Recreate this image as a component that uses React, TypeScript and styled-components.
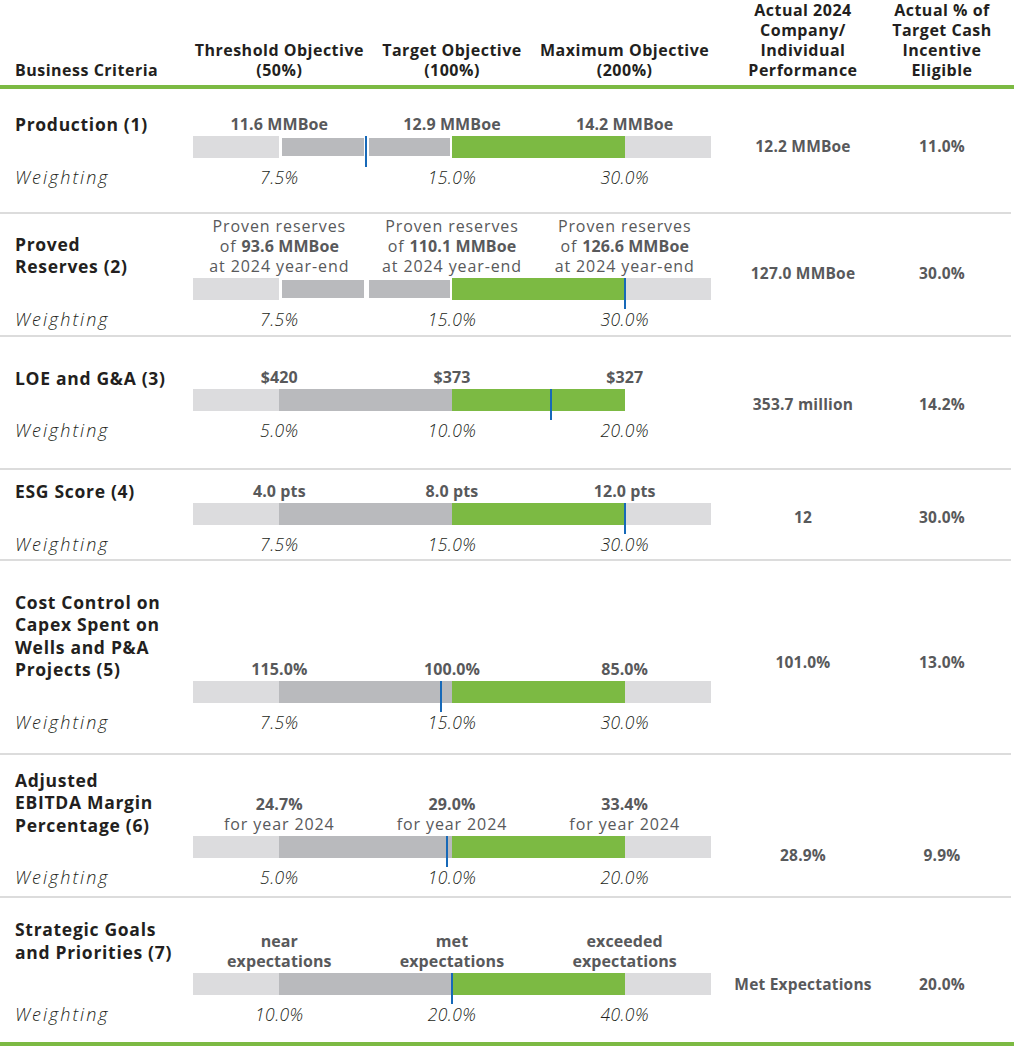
import React from "react";
import styled, { createGlobalStyle } from "styled-components";

const INK = "#231f20";
const GREY_TEXT = "#58595b";
const GREEN = "#7cba43";
const LIGHT = "#dcdcde";
const MID = "#b9babd";
const BLUE = "#1769b8";
const RULE = "#dcdcdc";

const Global = createGlobalStyle`
  html, body { margin: 0; padding: 0; background: #fff; }
  body { font-family: "Open Sans", "DejaVu Sans", sans-serif; color: ${INK}; }
`;

const Table = styled.div`
  width: 1014px;
  display: flex;
  flex-direction: column;
`;

const Header = styled.div`
  display: grid;
  grid-template-columns: 178px repeat(3, 172.67px) 184px 94px;
  align-items: end;
  height: 80px;
  padding: 0 0 5px 15px;
  border-bottom: 4px solid ${GREEN};
  font-weight: 700;
  font-size: 16px;
  line-height: 20px;
  letter-spacing: 0.5px;
`;

const HeadCell = styled.div<{ $left?: boolean }>`
  text-align: ${(p) => (p.$left ? "left" : "center")};
  white-space: nowrap;
  justify-self: ${(p) => (p.$left ? "start" : "center")};
`;

const Row = styled.div<{ $pt: number; $pb: number; $last?: boolean }>`
  display: grid;
  grid-template-columns: 178px 518px 184px 94px;
  grid-template-rows: auto auto auto;
  padding: ${(p) => p.$pt}px 0 ${(p) => p.$pb}px 15px;
  margin-right: ${(p) => (p.$last ? 0 : 3)}px;
  border-bottom: ${(p) => (p.$last ? `4px solid ${GREEN}` : `2px solid ${RULE}`)};
`;

const Title = styled.div<{ $mb?: number }>`
  grid-column: 1;
  grid-row: 1;
  align-self: end;
  margin-bottom: ${(p) => p.$mb ?? 0}px;
  font-weight: 700;
  font-size: 17.5px;
  line-height: 22.5px;
  letter-spacing: 0.7px;
  color: ${INK};
  white-space: nowrap;
`;

const Labels = styled.div`
  grid-column: 2;
  grid-row: 1;
  align-self: end;
  display: grid;
  grid-template-columns: repeat(3, 1fr);
  padding-bottom: 2px;
`;

const Label = styled.div<{ $bold?: boolean }>`
  text-align: center;
  white-space: nowrap;
  font-size: 16px;
  letter-spacing: ${(p) => (p.$bold ? 0.1 : 0.9)}px;
  line-height: 20px;
  font-weight: ${(p) => (p.$bold ? 700 : 400)};
  color: ${GREY_TEXT};
  b {
    font-weight: 700;
    letter-spacing: 0.1px;
  }
`;

const Bar = styled.div<{ $split?: boolean }>`
  grid-column: 2;
  grid-row: 2;
  position: relative;
  height: 22px;
  display: grid;
  grid-template-columns: ${(p) => (p.$split ? "1fr 1fr 1fr 2fr 1fr" : "1fr 2fr 2fr 1fr")};
`;

const Segment = styled.div<{ $tone: "light" | "mid" | "green" | "none"; $inset?: boolean }>`
  background: ${(p) =>
    p.$tone === "light" ? LIGHT : p.$tone === "mid" ? MID : p.$tone === "green" ? GREEN : "transparent"};
  border: ${(p) => (p.$inset ? "2px solid #fff" : "0")};
  border-left-width: ${(p) => (p.$inset ? 3 : 0)}px;
`;

const Marker = styled.div`
  position: absolute;
  top: 0;
  width: 2px;
  height: 31px;
  margin-left: -1px;
  background: ${BLUE};
`;

const WeightLabel = styled.div`
  grid-column: 1;
  grid-row: 3;
  margin-top: 8px;
  font-style: italic;
  font-weight: 300;
  font-size: 18px;
  letter-spacing: 2px;
  line-height: 22px;
  color: ${INK};
`;

const Weights = styled.div`
  grid-column: 2;
  grid-row: 3;
  margin-top: 8px;
  display: grid;
  grid-template-columns: repeat(3, 1fr);
`;

const Weight = styled.div`
  text-align: center;
  font-style: italic;
  font-weight: 300;
  font-size: 17.5px;
  letter-spacing: 0.4px;
  line-height: 22px;
  color: ${INK};
`;

const Value = styled.div<{ $col: number; $nudge?: number }>`
  grid-column: ${(p) => p.$col};
  grid-row: 1 / 4;
  align-self: center;
  text-align: center;
  white-space: nowrap;
  font-weight: 700;
  font-size: 15.5px;
  letter-spacing: 0.2px;
  line-height: 20px;
  color: ${GREY_TEXT};
  padding-top: ${(p) => Math.max(0, (p.$nudge ?? 0) * 2)}px;
  padding-bottom: ${(p) => Math.max(0, -(p.$nudge ?? 0) * 2)}px;
`;

type Tone = "light" | "mid" | "green" | "none";

interface RowData {
  title: React.ReactNode;
  titleMb?: number;
  labels: React.ReactNode[];
  labelsBold: boolean;
  split?: boolean;
  tail?: boolean;
  marker: number;
  weights: string[];
  actual: string;
  pct: string;
  pt: number;
  pb: number;
  nudge?: number;
}

const rows: RowData[] = [
  {
    title: "Production (1)",
    labels: ["11.6 MMBoe", "12.9 MMBoe", "14.2 MMBoe"],
    labelsBold: true,
    split: true,
    marker: 366,
    weights: ["7.5%", "15.0%", "30.0%"],
    actual: "12.2 MMBoe",
    pct: "11.0%",
    pt: 24,
    pb: 24,
    nudge: -4,
  },
  {
    title: (
      <>
        Proved
        <br />
        Reserves (2)
      </>
    ),
    labels: [
      <>
        Proven reserves
        <br />
        of <b>93.6 MMBoe</b>
        <br />
        at 2024 year-end
      </>,
      <>
        Proven reserves
        <br />
        of <b>110.1 MMBoe</b>
        <br />
        at 2024 year-end
      </>,
      <>
        Proven reserves
        <br />
        of <b>126.6 MMBoe</b>
        <br />
        at 2024 year-end
      </>,
    ],
    labelsBold: false,
    split: true,
    marker: 625,
    weights: ["7.5%", "15.0%", "30.0%"],
    actual: "127.0 MMBoe",
    pct: "30.0%",
    pt: 2,
    pb: 5,
  },
  {
    title: "LOE and G&A (3)",
    labels: ["$420", "$373", "$327"],
    labelsBold: true,
    tail: false,
    marker: 551,
    weights: ["5.0%", "10.0%", "20.0%"],
    actual: "353.7 million",
    pct: "14.2%",
    pt: 30,
    pb: 27,
  },
  {
    title: "ESG Score (4)",
    labels: ["4.0 pts", "8.0 pts", "12.0 pts"],
    labelsBold: true,
    marker: 625,
    weights: ["7.5%", "15.0%", "30.0%"],
    actual: "12",
    pct: "30.0%",
    pt: 10,
    pb: 4,
  },
  {
    title: (
      <>
        Cost Control on
        <br />
        Capex Spent on
        <br />
        Wells and P&amp;A
        <br />
        Projects (5)
      </>
    ),
    labels: ["115.0%", "100.0%", "85.0%"],
    labelsBold: true,
    marker: 441,
    weights: ["7.5%", "15.0%", "30.0%"],
    actual: "101.0%",
    pct: "13.0%",
    pt: 30,
    pb: 20,
  },
  {
    title: (
      <>
        Adjusted
        <br />
        EBITDA Margin
        <br />
        Percentage (6)
      </>
    ),
    labels: [
      <>
        <b>24.7%</b>
        <br />
        for year 2024
      </>,
      <>
        <b>29.0%</b>
        <br />
        for year 2024
      </>,
      <>
        <b>33.4%</b>
        <br />
        for year 2024
      </>,
    ],
    labelsBold: false,
    marker: 447,
    weights: ["5.0%", "10.0%", "20.0%"],
    actual: "28.9%",
    pct: "9.9%",
    pt: 14,
    pb: 8,
    nudge: 27,
  },
  {
    title: (
      <>
        Strategic Goals
        <br />
        and Priorities (7)
      </>
    ),
    titleMb: 10,
    labels: [
      <>
        near
        <br />
        expectations
      </>,
      <>
        met
        <br />
        expectations
      </>,
      <>
        exceeded
        <br />
        expectations
      </>,
    ],
    labelsBold: true,
    marker: 452,
    weights: ["10.0%", "20.0%", "40.0%"],
    actual: "Met Expectations",
    pct: "20.0%",
    pt: 20,
    pb: 17,
    nudge: 12,
  },
];

const BAR_START = 193;
const BAR_WIDTH = 518;

function Segments({ split, tail }: { split?: boolean; tail?: boolean }) {
  const tones: { tone: Tone; inset?: boolean }[] = split
    ? [
        { tone: "light" },
        { tone: "mid", inset: true },
        { tone: "mid", inset: true },
        { tone: "green" },
        { tone: "light" },
      ]
    : [{ tone: "light" }, { tone: "mid" }, { tone: "green" }, { tone: tail === false ? "none" : "light" }];
  return (
    <>
      {tones.map((t, i) => (
        <Segment key={i} $tone={t.tone} $inset={t.inset} />
      ))}
    </>
  );
}

export default function App() {
  return (
    <>
      <Global />
      <Table>
        <Header>
          <HeadCell $left>Business Criteria</HeadCell>
          <HeadCell>
            Threshold Objective
            <br />
            (50%)
          </HeadCell>
          <HeadCell>
            Target Objective
            <br />
            (100%)
          </HeadCell>
          <HeadCell>
            Maximum Objective
            <br />
            (200%)
          </HeadCell>
          <HeadCell>
            Actual 2024
            <br />
            Company/
            <br />
            Individual
            <br />
            Performance
          </HeadCell>
          <HeadCell>
            Actual % of
            <br />
            Target Cash
            <br />
            Incentive
            <br />
            Eligible
          </HeadCell>
        </Header>
        {rows.map((r, i) => (
          <Row key={i} $pt={r.pt} $pb={r.pb} $last={i === rows.length - 1}>
            <Title $mb={r.titleMb}>{r.title}</Title>
            <Labels>
              {r.labels.map((l, j) => (
                <Label key={j} $bold={r.labelsBold}>
                  {l}
                </Label>
              ))}
            </Labels>
            <Bar $split={r.split}>
              <Segments split={r.split} tail={r.tail} />
              <Marker style={{ left: `${((r.marker - BAR_START) / BAR_WIDTH) * 100}%` }} />
            </Bar>
            <WeightLabel>Weighting</WeightLabel>
            <Weights>
              {r.weights.map((w, j) => (
                <Weight key={j}>{w}</Weight>
              ))}
            </Weights>
            <Value $col={3} $nudge={r.nudge}>
              {r.actual}
            </Value>
            <Value $col={4} $nudge={r.nudge}>
              {r.pct}
            </Value>
          </Row>
        ))}
      </Table>
    </>
  );
}
